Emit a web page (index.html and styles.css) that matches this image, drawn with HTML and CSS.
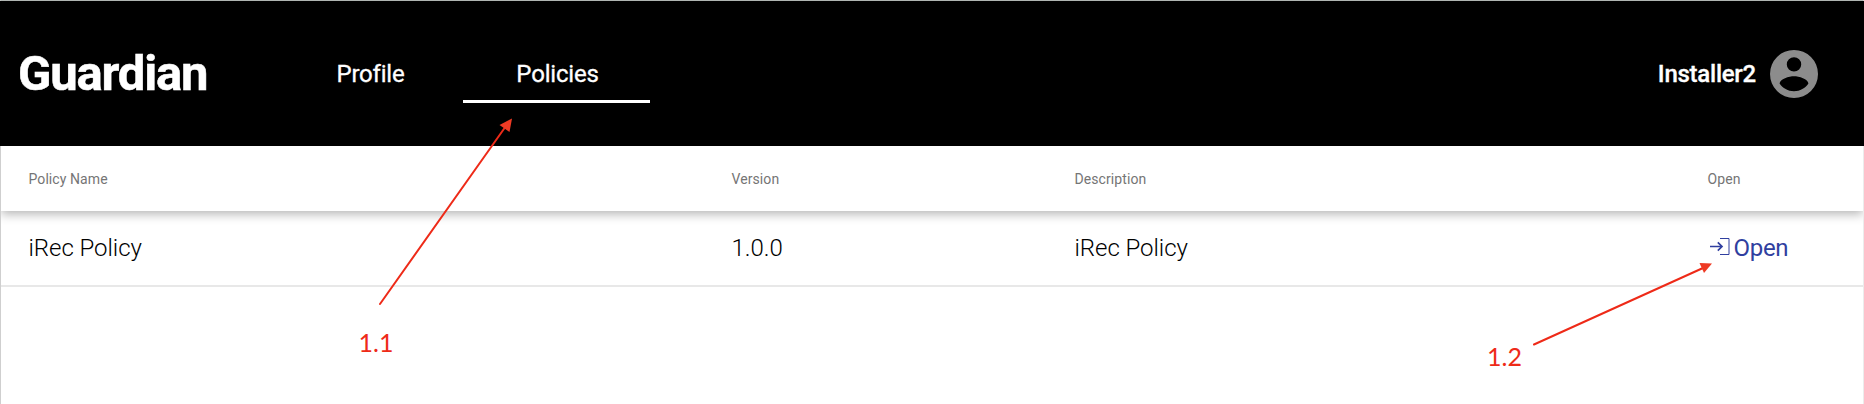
FILE: index.html
```html
<!DOCTYPE html>
<html lang="en">
<head>
<meta charset="utf-8">
<title>Guardian</title>
<link rel="stylesheet" href="styles.css">
</head>
<body>
<div class="app">
  <header class="header">
    <div class="brand">Guardian</div>
    <nav class="tabs">
      <a class="tab">Profile</a>
      <a class="tab tab-active">Policies</a>
    </nav>
    <div class="user">
      <span class="user-name">Installer2</span>
      <svg class="avatar" viewBox="2 2 20 20"><path fill="#8c8c8c" fill-rule="evenodd" d="M12 2a10 10 0 1 0 0 20a10 10 0 0 0 0-20zM12 5a3 3 0 1 1 0 6a3 3 0 0 1 0-6zM12 19.2c-2.500 0-4.710-1.280-6-3.220c.030-1.990 4-3.080 6-3.080s5.970 1.090 6 3.080c-1.290 1.940-3.500 3.220-6 3.220z"/></svg>
    </div>
  </header>
  <main class="table">
    <div class="row row-head">
      <span>Policy Name</span><span>Version</span><span>Description</span><span>Open</span>
    </div>
    <div class="row row-body">
      <span>iRec Policy</span><span>1.0.0</span><span>iRec Policy</span>
      <a class="open"><svg class="open-icon" viewBox="0 0 20 17"><path fill="none" stroke="#303f9f" stroke-width="1.700" d="M0 8.500h12M7.800 4.300l4.200 4.200l-4.200 4.200"/><path fill="none" stroke="#303f9f" stroke-width="1" d="M10 .5h9v16h-9"/></svg><span class="open-label">Open</span></a>
    </div>
  </main>
</div>
<svg class="notes" viewBox="0 0 1864 404">
  <g stroke="#ee2a18" stroke-width="2" stroke-linecap="round">
    <path d="M380 304L506 126"/><path d="M1534 344.500L1703 268"/>
  </g>
  <g fill="#ee3a24"><path d="M512 118.500L509.500 132L499.500 125z"/><path d="M1712 263.500L1704 273L1699.500 263z"/></g>
  <g class="note-text"><text x="358.500" y="352" textLength="35">1.1</text><text x="1487" y="366" textLength="35">1.2</text></g>
</svg>
</body>
</html>
```
FILE: styles.css
```css
* { box-sizing: border-box; }
body { margin: 0; background: #fff; font-family: Roboto, "Liberation Sans", sans-serif; }
.app { height: 404px; border-top: 1px solid #b0b5b2; border-left: 1px solid #cfcfcf; border-right: 1px solid #ececec; }
.header { height: 145px; margin: 0 -1px; padding: 0 46px 0 18px; display: flex; align-items: center; background: #000; color: #fff; }
.brand { width: 258px; font-size: 49px; font-weight: 700; letter-spacing: -1.2px; -webkit-text-stroke: .5px #fff; }
.tabs { display: flex; }
.tab { width: 187px; height: 58px; line-height: 58px; padding-left: 2px; text-align: center; font-size: 24px; letter-spacing: -.2px; -webkit-text-stroke: .3px #fff; }
.tab-active { border-bottom: 3px solid #fff; }
.user { margin-left: auto; display: flex; align-items: center; gap: 14px; }
.user-name { font-size: 24px; font-weight: 500; letter-spacing: -.25px; -webkit-text-stroke: .3px #fff; }
.avatar { width: 48px; height: 48px; display: block; }
.row { display: grid; grid-template-columns: 703px 343px 633px 1fr; align-items: center; padding-left: 27.500px; }
.row-head { height: 65px; font-size: 14px; letter-spacing: .08px; color: #757575; box-shadow: 0 3px 10px rgba(0, 0, 0, .3); clip-path: inset(0 0 -20px 0); }
.row-body { height: 76px; border-bottom: 2px solid #e8e8e8; font-size: 24px; font-weight: 300; letter-spacing: -.05px; color: #000; }
.open { display: flex; align-items: center; gap: 4px; padding-left: 2px; color: #303f9f; font-weight: 400; letter-spacing: -.3px; }
.open-icon { width: 20px; height: 17px; margin-top: -4px; }
.notes { position: absolute; left: 0; top: 0; width: 1864px; height: 404px; pointer-events: none; }
.note-text { font-family: Lato, "Liberation Sans", sans-serif; font-size: 25px; fill: #ee2a18; }
```
